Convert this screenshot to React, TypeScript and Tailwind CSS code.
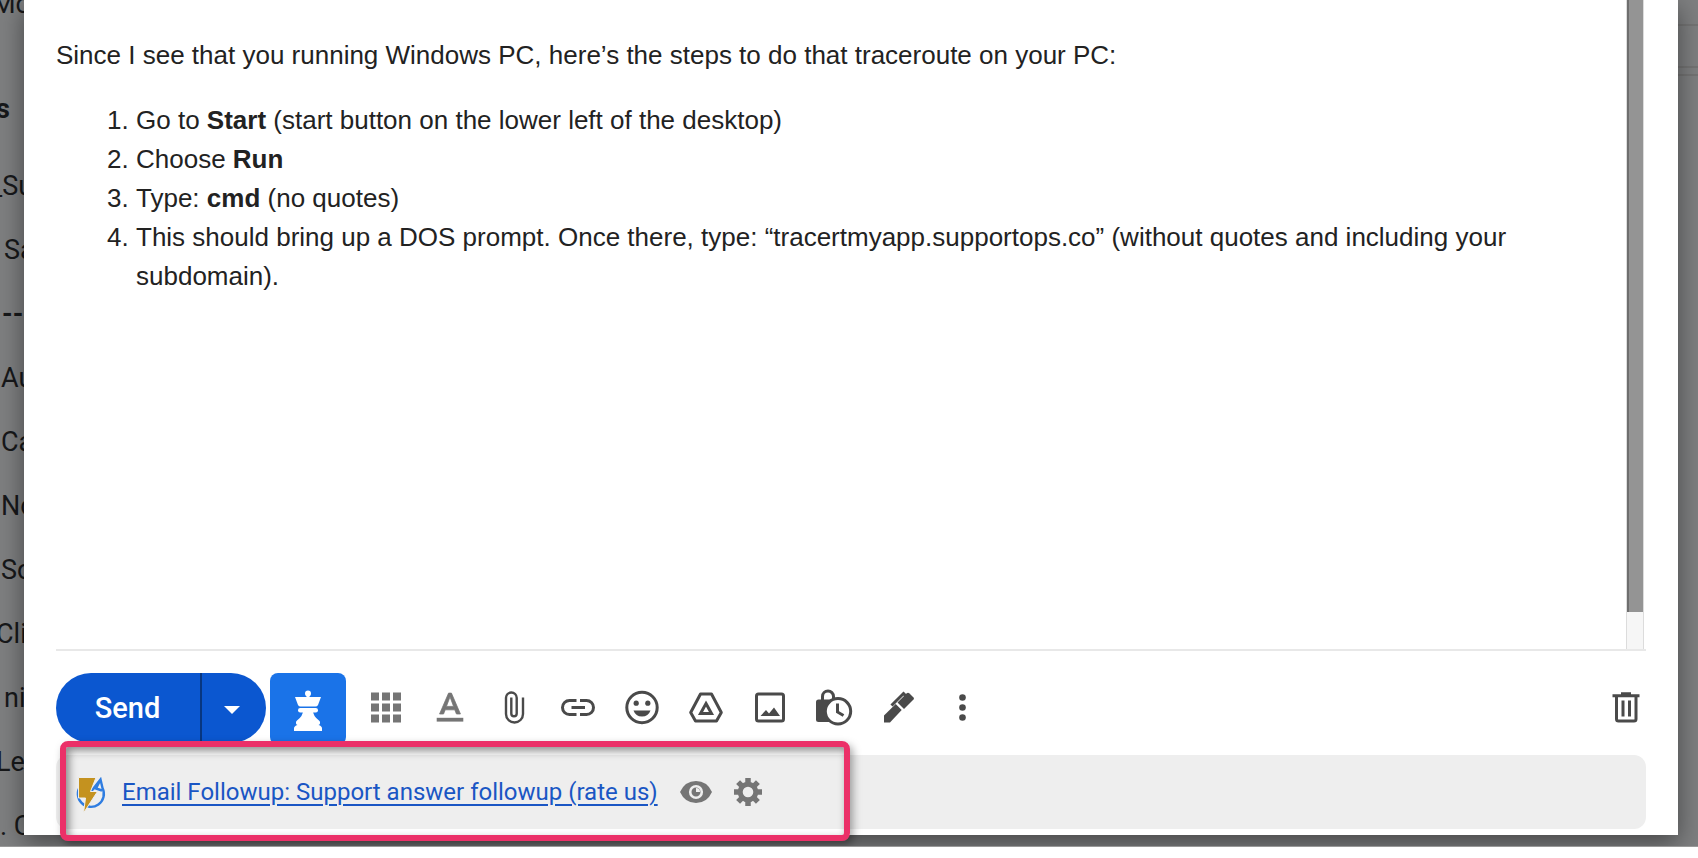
import type { ReactNode } from "react";

const sidebarItems = [
  { text: "Mo", className: "h-[57px] -mt-6 -ml-2" },
  { text: "s", className: "h-[121px] pt-8 -ml-1 font-bold" },
  { text: "_Su", className: "h-16 -ml-2.5" },
  { text: "Sa", className: "h-16 ml-1" },
  { text: "---", className: "h-16 ml-0.5 font-bold" },
  { text: "Au", className: "h-16 ml-px" },
  { text: "Ca", className: "h-16 ml-px" },
  { text: "No", className: "h-16 ml-px" },
  { text: "So", className: "h-16 ml-px" },
  { text: "Cli", className: "h-16 -ml-1" },
  { text: "ni", className: "h-16 ml-1" },
  { text: "Le", className: "h-16 -ml-1" },
  { text: ". C", className: "h-16" },
];

function Icon({ children }: { children: ReactNode }) {
  return (
    <svg
      width="40"
      height="40"
      viewBox="0 0 40 40"
      fill="none"
      stroke="currentColor"
      strokeWidth="3"
      aria-hidden="true"
    >
      {children}
    </svg>
  );
}

const tools = [
  {
    label: "Templates",
    className: "text-[#757575]",
    icon: (
      <g fill="currentColor" stroke="none">
        {[5, 16, 27].map((y) =>
          [5, 16, 27].map((x) => <rect key={`${x}-${y}`} x={x} y={y + 0.5} width="8" height="8" />)
        )}
      </g>
    ),
  },
  {
    label: "Formatting options",
    className: "text-[#757575]",
    icon: (
      <g transform="translate(-2.8 -1.5) scale(1.9)" fill="currentColor" strokeWidth="0.4">
        <path
          stroke="none"
          d="M5 17v2h14v-2H5z"
        />
        <path d="M9.5 12.8h5l.9 2.200h2.100L12.750 4h-1.500L6.500 15h2.100l.9-2.200zM12 5.980L13.870 11h-3.740L12 5.980z" />
      </g>
    ),
  },
  {
    label: "Attach files",
    className: "text-[#4a4a4a]",
    icon: (
      <path
        strokeWidth="2.4"
        d="M29 10.5V27a8.5 8.5 0 0 1-17 0V10.8a5.3 5.3 0 0 1 10.7 0V26.5a2.7 2.7 0 0 1-5.4 0V10.5"
      />
    ),
  },
  {
    label: "Insert link",
    className: "text-[#4a4a4a]",
    icon: <path d="M18.5 13.5H11.5a7 7 0 0 0 0 14h7M22 13.5h6.5a7 7 0 0 1 0 14H22M13.5 20.5h13.5" />,
  },
  {
    label: "Insert emoji",
    className: "text-[#4a4a4a]",
    icon: (
      <>
        <circle cx="20" cy="20.5" r="15.2" />
        <g fill="currentColor" stroke="none">
          <circle cx="14.2" cy="16.2" r="2.6" />
          <circle cx="25.8" cy="16.2" r="2.6" />
          <path d="M11.5 23.5h17a9 9 0 0 1-17 0z" />
        </g>
      </>
    ),
  },
  {
    label: "Insert files using Drive",
    className: "text-[#4a4a4a]",
    icon: (
      <>
        <path strokeLinejoin="round" d="M14.5 7h11L35.3 25.5l-4.8 8.5h-21L4.7 25.5z" />
        <path d="M20 16.5l5.5 10h-11z" />
      </>
    ),
  },
  {
    label: "Insert photo",
    className: "text-[#4a4a4a]",
    icon: (
      <>
        <rect x="6.5" y="7" width="27" height="27" rx="2" />
        <path fill="currentColor" stroke="none" d="M10.5 29l5.5-6 3 3.5 5-6 6 8.5z" />
      </>
    ),
  },
  {
    label: "Toggle confidential mode",
    className: "text-[#4a4a4a]",
    icon: (
      <>
        <rect x="2" y="12.5" width="24" height="22.5" rx="2.5" fill="currentColor" stroke="none" />
        <path d="M8.5 13.5V9.5a5.5 5.5 0 0 1 11 0v4" />
        <circle cx="24" cy="24.3" r="12.7" fill="white" />
        <path d="M23.5 16.5v8.5l6 3.5" />
      </>
    ),
  },
  {
    label: "Insert signature",
    className: "text-[#4a4a4a]",
    icon: (
      <>
        <path fill="currentColor" stroke="none" d="M6 35.5v-7L17.7 17l6 6L12 35.5z" />
        <path fill="currentColor" stroke="none" d="M19.5 15.5l9-9q1.500-1.500 3 0l4 4q1 1 0 2l-9.500 9.500z" />
        <path d="M13.5 18.5L25.5 6.5l4 4" />
      </>
    ),
  },
  {
    label: "More options",
    className: "text-[#4a4a4a]",
    icon: (
      <g fill="currentColor" stroke="none">
        <circle cx="20.5" cy="10.5" r="3.3" />
        <circle cx="20.5" cy="20.5" r="3.3" />
        <circle cx="20.5" cy="30.5" r="3.3" />
      </g>
    ),
  },
];

function Sidebar() {
  return (
    <nav className="w-6 shrink-0 overflow-hidden font-[Roboto,sans-serif] text-[27px] text-[#17181a]">
      <ul>
        {sidebarItems.map((item) => (
          <li key={item.text} className={`flex items-center whitespace-nowrap ${item.className}`}>
            {item.text}
          </li>
        ))}
      </ul>
    </nav>
  );
}

function Message() {
  return (
    <div className="flex min-h-0 flex-1 border-b-2 border-[#e8e8e8]">
      <div className="flex-1 pt-9 pr-10 text-[26px] leading-[39px] text-[#222]">
        <p>Since I see that you running Windows PC, here’s the steps to do that traceroute on your PC:</p>
        <ol className="mt-[26px] list-decimal pl-20">
          <li>
            Go to <b>Start</b> (start button on the lower left of the desktop)
          </li>
          <li>
            Choose <b>Run</b>
          </li>
          <li>
            Type: <b>cmd</b> (no quotes)
          </li>
          <li>
            This should bring up a DOS prompt. Once there, type: “tracertmyapp.supportops.co” (without
            quotes and including your subdomain).
          </li>
        </ol>
      </div>
      <div className="mr-0.5 w-[18px] border-x border-[#dcdcdc] bg-[#f6f6f6] pb-[37px]">
        <div className="h-full border-l-2 border-[#6e6e6e] bg-[#949494]" />
      </div>
    </div>
  );
}

function Toolbar() {
  return (
    <div className="flex h-[104px] items-start pt-[22px]">
      <div className="flex h-[70px] overflow-hidden rounded-full bg-[#0b57d0] text-white">
        <button className="w-36 pt-0.5 pr-px font-[Roboto,sans-serif] text-[29px] font-medium">Send</button>
        <button aria-label="More send options" className="w-[66px] border-l-2 border-[#073680] pr-1 pt-1">
          <svg width="16" height="8" viewBox="0 0 16 8" fill="currentColor" className="mx-auto">
            <path d="M0 0h16L8 8z" />
          </svg>
        </button>
      </div>
      <button
        aria-label="Assistant"
        className="ml-1 flex h-[72px] w-[76px] justify-center rounded-lg bg-[#1a73e8] pt-[17px] text-white"
      >
        <svg width="30" height="42" viewBox="0 0 30 42" fill="currentColor">
          <circle cx="15" cy="3.5" r="3" />
          <path d="M13.5 5h3v2H28l-3 8q-.8 1.500-2.500 1.500h-15Q5.800 16.500 5 15L2 7h11.500z" />
          <rect x="5" y="18" width="20" height="4.500" rx="2.200" />
          <path d="M10 21h10q0 5 6 9.500 1.500 1 1 3-.3 1-1.500 1.500 3.500 1 3.500 3.500V41H1v-2.500Q1 36 4.500 35 3.300 34.500 3 33.500q-.5-2 1-3Q10 26 10 21z" />
        </svg>
      </button>
      <div className="ml-5 flex gap-6">
        {tools.map((tool) => (
          <button key={tool.label} aria-label={tool.label} className={`mt-3.5 ${tool.className}`}>
            <Icon>{tool.icon}</Icon>
          </button>
        ))}
      </div>
      <button aria-label="Discard draft" className="mt-3.5 ml-auto text-[#4a4a4a]">
        <Icon>
          <path d="M6.5 8.7h27M15 6.8h10M10.5 9v23q0 2 2 2h15.500q2 0 2-2V9M17 13.500v16M23.500 13.500v16" />
        </Icon>
      </button>
    </div>
  );
}

function FollowupBar() {
  return (
    <div className="relative mb-1.5 flex h-[74px] shrink-0 items-center rounded-xl bg-[#eee] pl-[18px]">
      <svg width="32" height="38" viewBox="0 0 32 38" fill="none" className="mt-1 shrink-0" aria-hidden="true">
        <path
          d="M6.500 11A13 13 0 1 0 28.500 13L26.500 4.500 17.500 16M26.500 4.500l-4.500 9 6 2"
          stroke="#2f7de1"
          strokeWidth="2.400"
        />
        <path d="M4.500 2.500h17.500l-5.500 14h7L9.500 38l2-15h-7z" fill="#c4921f" stroke="#eee" strokeWidth="1" />
      </svg>
      <a
        href="#"
        className="ml-4 font-[Roboto,sans-serif] text-[24px] whitespace-nowrap text-[#1a56c4] underline decoration-2 underline-offset-4"
      >
        Email Followup: Support answer followup (rate us)
      </a>
      <button aria-label="Preview" className="ml-[22px] text-[#757575]">
        <svg width="32" height="22" viewBox="0 0 32 22" fill="currentColor">
          <path d="M0 11Q5 0 16 0t16 11Q27 22 16 22T0 11z" />
          <circle cx="16" cy="11" r="5.8" stroke="#eee" strokeWidth="2.6" />
          <path d="M16 11V7a4 4 0 0 1 4 4z" fill="#eee" />
        </svg>
      </button>
      <button aria-label="Settings" className="ml-[22px] text-[#757575]">
        <svg width="28" height="28" viewBox="0 0 28 28" fill="none" stroke="currentColor">
          <circle cx="14" cy="14" r="7.8" strokeWidth="5" />
          <path
            d="M14 0v5M14 23v5M0 14h5M23 14h5M4.100 4.100l3.500 3.500M20.400 20.400l3.500 3.500M4.100 23.900l3.500-3.500M20.400 7.600l3.500-3.500"
            strokeWidth="5.500"
          />
        </svg>
      </button>
      <div className="pointer-events-none absolute -top-3.5 -bottom-3 left-1 w-[790px] rounded-lg border-[6px] border-[#eb3068] shadow-[3px_4px_8px_rgba(0,0,0,0.35),inset_3px_4px_8px_rgba(0,0,0,0.45)]" />
    </div>
  );
}

export default function App() {
  return (
    <div className="flex h-screen flex-col overflow-hidden bg-white pb-[11px] font-['Liberation_Sans',Arial,sans-serif]">
      <div className="flex min-h-0 flex-1 border-b border-[#999] bg-[#7e7f80]">
        <Sidebar />
        <div
          role="dialog"
          aria-label="Compose message"
          className="relative mb-[11px] flex min-w-0 flex-1 flex-col bg-white px-8 shadow-[0_8px_24px_rgba(0,0,0,0.45)] [clip-path:inset(0_-40px_-11px_-40px)]"
        >
          <Message />
          <Toolbar />
          <FollowupBar />
        </div>
        <div className="w-5 shrink-0 pt-6">
          <div className="h-11 border-y-2 border-[#747474]" />
          <div className="h-2 border-b-2 border-[#747474]" />
        </div>
      </div>
    </div>
  );
}
